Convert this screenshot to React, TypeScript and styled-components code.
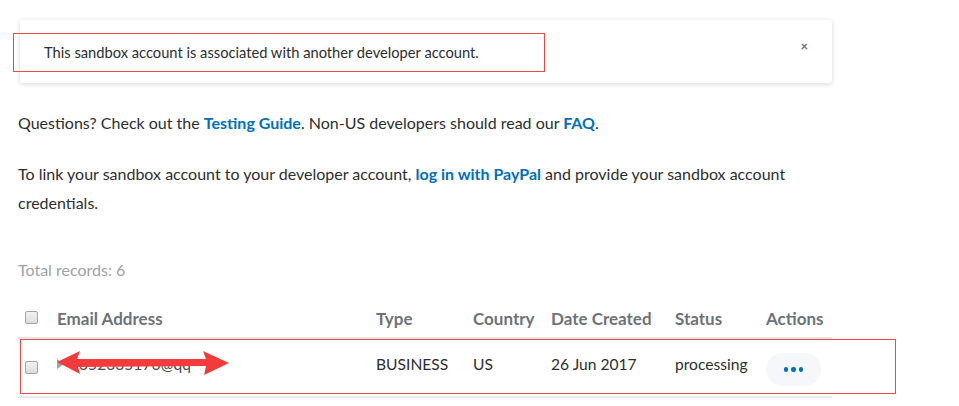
import React from "react";
import styled, { createGlobalStyle } from "styled-components";

const Global = createGlobalStyle`
  html, body { margin: 0; padding: 0; background: #ffffff; }
  body { font-family: Lato, "Open Sans", sans-serif; color: #2c2e2f; }
`;

const Page = styled.div`
  position: relative;
  width: 959px;
  height: 406px;
  padding: 20px 0 0 18px;
  box-sizing: border-box;
  overflow: hidden;
`;

const Alert = styled.div`
  margin-left: 2px;
  width: 812px;
  height: 63px;
  box-sizing: border-box;
  display: flex;
  align-items: center;
  justify-content: space-between;
  padding: 0 24px 0 24px;
  border-radius: 3px;
  box-shadow: 0 1px 5px rgba(0, 0, 0, 0.16);
  font-size: 14.7px;
  color: #2c2e2f;
`;

const Close = styled.span`
  font-size: 13px;
  font-weight: 700;
  color: #6c7378;
  margin-top: -10px;
  line-height: 1;
`;

const Para = styled.p<{ $top: number }>`
  margin: ${(p) => p.$top}px 0 0 0;
  font-size: 16px;
  line-height: 29px;
  color: #2c2e2f;
  width: 790px;
`;

const Link = styled.a`
  color: #0070ba;
  font-weight: 700;
  text-decoration: none;
`;

const Total = styled.div`
  margin-top: 38px;
  font-size: 16px;
  line-height: 29px;
  color: #9da3a6;
`;

const Table = styled.div`
  margin-top: 16px;
  width: 814px;
`;

const cols = "39px 319px 97px 78px 124px 91px 66px";

const HeadRow = styled.div`
  display: grid;
  grid-template-columns: ${cols};
  align-items: center;
  height: 37px;
  border-bottom: 2px solid #e6e6e6;
  font-size: 17px;
  font-weight: 700;
  color: #6c7378;
  white-space: nowrap;
`;

const BodyRow = styled.div`
  display: grid;
  grid-template-columns: ${cols};
  align-items: center;
  height: 57px;
  border-bottom: 2px solid #ececec;
  font-size: 15.6px;
  color: #2c2e2f;
  white-space: nowrap;
`;

const Cell = styled.div<{ $up?: boolean }>`
  margin-top: ${(p) => (p.$up ? "-8px" : "0")};
`;

const Check = styled.span<{ $up?: boolean }>`
  display: block;
  width: 11px;
  height: 11px;
  margin-left: 7px;
  margin-top: ${(p) => (p.$up ? "-2px" : "0")};
  border: 1px solid #a4a4a4;
  border-radius: 2px;
  background: linear-gradient(#f2f2f2, #dcdcdc);
`;

const Email = styled.span`
  color: #4a4d4f;
  display: inline-flex;
  align-items: center;
  gap: 6px;
`;

const Caret = styled.span`
  width: 0;
  height: 0;
  border-top: 5px solid transparent;
  border-bottom: 5px solid transparent;
  border-left: 7px solid #9da3a6;
`;

const DotsButton = styled.button`
  width: 55px;
  height: 33px;
  border: none;
  border-radius: 17px;
  background: #f5f7fa;
  display: flex;
  align-items: center;
  justify-content: center;
  gap: 3px;
  padding: 0;
  margin-top: 4px;
`;

const Dot = styled.span`
  width: 4.5px;
  height: 4.5px;
  border-radius: 50%;
  background: #0070ba;
`;

const RedBox = styled.div<{ $x: number; $y: number; $w: number; $h: number }>`
  position: absolute;
  left: ${(p) => p.$x}px;
  top: ${(p) => p.$y}px;
  width: ${(p) => p.$w}px;
  height: ${(p) => p.$h}px;
  box-sizing: border-box;
  border: 1.5px solid #f04848;
  pointer-events: none;
`;

const ArrowSvg = styled.svg`
  position: absolute;
  left: 56px;
  top: 350px;
`;

export default function App() {
  return (
    <>
      <Global />
      <Page>
        <Alert>
          <span>This sandbox account is associated with another developer account.</span>
          <Close>×</Close>
        </Alert>
        <Para $top={25}>
          Questions? Check out the <Link>Testing Guide</Link>. Non-US developers should read our{" "}
          <Link>FAQ</Link>.
        </Para>
        <Para $top={22}>
          To link your sandbox account to your developer account, <Link>log in with PayPal</Link> and
          provide your sandbox account credentials.
        </Para>
        <Total>Total records: 6</Total>
        <Table>
          <HeadRow>
            <Check $up />
            <Cell>Email Address</Cell>
            <Cell>Type</Cell>
            <Cell>Country</Cell>
            <Cell>Date Created</Cell>
            <Cell>Status</Cell>
            <Cell>Actions</Cell>
          </HeadRow>
          <BodyRow>
            <Check />
            <Cell $up>
              <Email>
                <Caret />
                1352335176@qq
              </Email>
            </Cell>
            <Cell $up>BUSINESS</Cell>
            <Cell $up>US</Cell>
            <Cell $up>26 Jun 2017</Cell>
            <Cell $up>processing</Cell>
            <Cell>
              <DotsButton>
                <Dot />
                <Dot />
                <Dot />
              </DotsButton>
            </Cell>
          </BodyRow>
        </Table>
        <RedBox $x={13} $y={33} $w={532} $h={39} />
        <RedBox $x={20} $y={339} $w={876} $h={55} />
        <ArrowSvg width="174" height="26" viewBox="0 0 174 26">
          <polygon
            points="1,12 24,1 21,9 150,9 147,1 173,13 148,25 150,16 22,17 24,24"
            fill="#f43b3b"
          />
        </ArrowSvg>
      </Page>
    </>
  );
}
